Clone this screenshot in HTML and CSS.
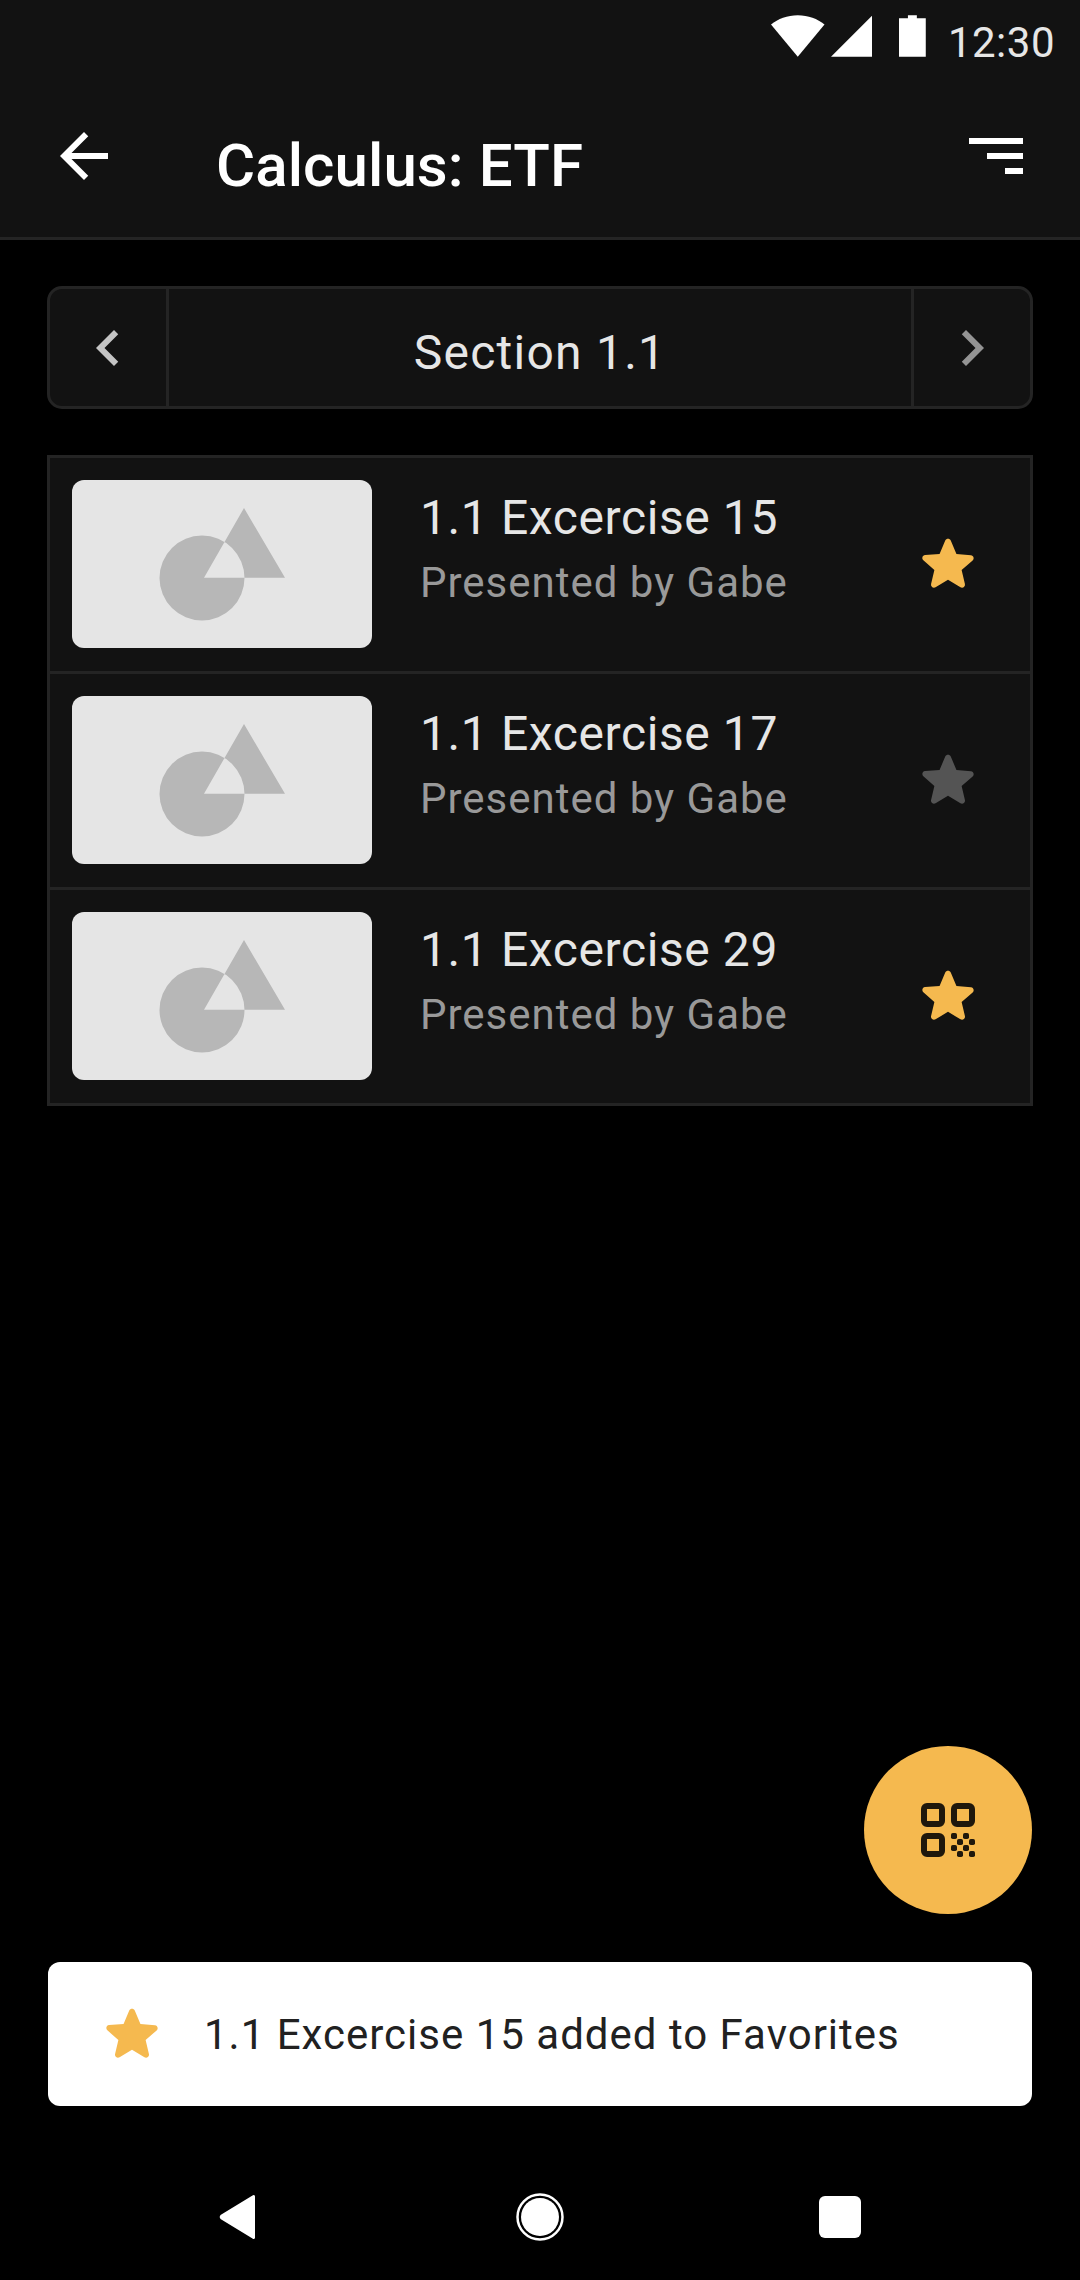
FILE: index.html
```html
<!DOCTYPE html>
<html lang="en">
<head>
<meta charset="utf-8">
<title>Calculus: ETF</title>
<link rel="stylesheet" href="styles.css">
</head>
<body>
<div class="screen">
  <header class="header">
    <div class="status">
      <svg class="st-wifi" viewBox="0 0 54 42"><path d="M27 42 0 9.5C7 3.5 16.5 0 27 0s20 3.500 27 9.500z"/></svg>
      <svg class="st-signal" viewBox="0 0 42 42"><path d="M42 0v42H0z"/></svg>
      <svg class="st-batt" viewBox="0 0 27 42"><path d="M9 0h9v3h9v39H0V3h9z"/></svg>
      <span class="st-time">12:30</span>
    </div>
    <div class="toolbar">
      <svg class="tb-back" viewBox="0 0 24 24"><path d="M20 11H7.830l5.590-5.590L12 4l-8 8 8 8 1.410-1.410L7.830 13H20v-2z"/></svg>
      <h1 class="tb-title">Calculus: ETF</h1>
      <svg class="tb-filter" viewBox="0 0 54 36"><path d="M0 0h54v6H0zM18 15h36v6H18zM36 30h18v6H36z"/></svg>
    </div>
  </header>

  <div class="pager">
    <div class="pager-btn"><svg class="chev chev-l" viewBox="0 0 24 24"><path d="M15.410 7.410 14 6l-6 6 6 6 1.410-1.410L10.830 12z"/></svg></div>
    <div class="pager-label">Section 1.1</div>
    <div class="pager-btn pager-btn-r"><svg class="chev chev-r" viewBox="0 0 24 24"><path d="M8.590 16.590 10 18l6-6-6-6-1.410 1.410L13.170 12z"/></svg></div>
  </div>

  <ul class="list">
    <li class="row">
      <div class="thumb"><svg class="thumb-art" viewBox="0 0 300 168"><path fill-rule="evenodd" d="M87.500 98a42.500 42.500 0 1 0 85 0 42.500 42.500 0 1 0-85 0zM132 97.800 172 28l41 69.800z"/></svg></div>
      <div class="row-text"><div class="row-title">1.1 Excercise 15</div><div class="row-sub">Presented by Gabe</div></div>
      <svg class="star star-on" viewBox="0 0 24 24"><path d="M12 17.270l4.150 2.510c.76.46 1.690-.22 1.490-1.080l-1.100-4.720 3.670-3.180c.67-.58.31-1.680-.57-1.750l-4.830-.41-1.890-4.460c-.34-.81-1.500-.81-1.840 0L9.190 8.630l-4.830.41c-.88.07-1.240 1.170-.57 1.750l3.670 3.180-1.100 4.720c-.2.86.73 1.540 1.490 1.080l4.150-2.500z"/></svg>
    </li>
    <li class="row">
      <div class="thumb"><svg class="thumb-art" viewBox="0 0 300 168"><path fill-rule="evenodd" d="M87.500 98a42.500 42.500 0 1 0 85 0 42.500 42.500 0 1 0-85 0zM132 97.800 172 28l41 69.800z"/></svg></div>
      <div class="row-text"><div class="row-title">1.1 Excercise 17</div><div class="row-sub">Presented by Gabe</div></div>
      <svg class="star star-off" viewBox="0 0 24 24"><path d="M12 17.270l4.150 2.510c.76.46 1.690-.22 1.490-1.080l-1.100-4.720 3.670-3.180c.67-.58.31-1.680-.57-1.750l-4.830-.41-1.890-4.460c-.34-.81-1.500-.81-1.840 0L9.190 8.630l-4.830.41c-.88.07-1.240 1.170-.57 1.750l3.670 3.180-1.100 4.720c-.2.86.73 1.540 1.490 1.080l4.150-2.500z"/></svg>
    </li>
    <li class="row">
      <div class="thumb"><svg class="thumb-art" viewBox="0 0 300 168"><path fill-rule="evenodd" d="M87.500 98a42.500 42.500 0 1 0 85 0 42.500 42.500 0 1 0-85 0zM132 97.800 172 28l41 69.800z"/></svg></div>
      <div class="row-text"><div class="row-title">1.1 Excercise 29</div><div class="row-sub">Presented by Gabe</div></div>
      <svg class="star star-on" viewBox="0 0 24 24"><path d="M12 17.270l4.150 2.510c.76.46 1.690-.22 1.490-1.080l-1.100-4.720 3.670-3.180c.67-.58.31-1.680-.57-1.750l-4.830-.41-1.890-4.460c-.34-.81-1.500-.81-1.840 0L9.190 8.630l-4.830.41c-.88.07-1.240 1.170-.57 1.750l3.670 3.180-1.100 4.720c-.2.86.73 1.540 1.490 1.080l4.150-2.500z"/></svg>
    </li>
  </ul>

  <div class="spacer"></div>

  <div class="fab-row">
    <div class="fab">
      <svg class="qr" viewBox="0 0 54 54">
        <g class="qr-rings">
          <rect x="3" y="3" width="18" height="18" rx="3"/>
          <rect x="33" y="3" width="18" height="18" rx="3"/>
          <rect x="3" y="33" width="18" height="18" rx="3"/>
        </g>
        <g class="qr-dots">
          <rect x="30" y="30" width="6" height="6" rx="1.800"/>
          <rect x="42" y="30" width="6" height="6" rx="1.800"/>
          <rect x="36" y="36" width="6" height="6" rx="1.800"/>
          <rect x="48" y="36" width="6" height="6" rx="1.800"/>
          <rect x="30" y="42" width="6" height="6" rx="1.800"/>
          <rect x="42" y="42" width="6" height="6" rx="1.800"/>
          <rect x="36" y="48" width="6" height="6" rx="1.800"/>
          <rect x="48" y="48" width="6" height="6" rx="1.800"/>
        </g>
      </svg>
    </div>
  </div>

  <div class="snackbar">
    <svg class="star star-on snack-star" viewBox="0 0 24 24"><path d="M12 17.270l4.150 2.510c.76.46 1.690-.22 1.490-1.080l-1.100-4.720 3.670-3.180c.67-.58.31-1.680-.57-1.750l-4.830-.41-1.890-4.460c-.34-.81-1.500-.81-1.840 0L9.190 8.630l-4.830.41c-.88.07-1.240 1.170-.57 1.750l3.670 3.180-1.100 4.720c-.2.86.73 1.540 1.490 1.080l4.150-2.500z"/></svg>
    <span class="snack-text">1.1 Excercise 15 added to Favorites</span>
  </div>

  <nav class="navbar">
    <svg class="nav-icon" viewBox="0 0 72 72"><path d="M51 15.500v41c0 1.500-1.500 2-2.500 1L16.500 38a3 3 0 0 1 0-4L48.500 14.500c1-1 2.500-.5 2.500 1z"/></svg>
    <svg class="nav-icon" viewBox="0 0 72 72"><circle class="nav-ring" cx="36" cy="36" r="22.500"/><circle cx="36" cy="36" r="19"/></svg>
    <svg class="nav-icon" viewBox="0 0 72 72"><rect x="15" y="15" width="42" height="42" rx="6"/></svg>
  </nav>
</div>
</body>
</html>
```

FILE: styles.css
```css
* { box-sizing: border-box; }
html, body { margin: 0; padding: 0; }
body { background: #000; font-family: Roboto, "Liberation Sans", sans-serif; }
.screen { width: 1080px; height: 2280px; display: flex; flex-direction: column; background: #000; overflow: hidden; }

.header { height: 240px; background: #121212; border-bottom: 3px solid #242424; flex: none; }
.status { height: 72px; display: flex; align-items: flex-start; padding: 15px 25px 0 771px; fill: #fff; }
.st-wifi { width: 54px; height: 42px; }
.st-signal { width: 42px; height: 42px; margin-left: 6px; }
.st-batt { width: 27px; height: 42px; margin-left: 27px; }
.st-time { margin-left: 22px; font-size: 42px; line-height: 50px; height: 50px; margin-top: 3px; letter-spacing: 0.5px; color: #e6e6e6; }

.toolbar { display: flex; align-items: flex-start; position: relative; height: 165px; }
.tb-back { width: 72px; height: 72px; margin: 48px 0 0 48px; fill: #fff; flex: none; }
.tb-title { margin: 58px 0 0 96px; font-size: 60px; line-height: 72px; font-weight: 500; letter-spacing: 0.1px; color: #fff; flex: 1; }
.tb-filter { width: 54px; height: 36px; margin: 66px 57px 0 0; fill: #fff; flex: none; }

.pager { flex: none; display: flex; width: 986px; height: 123px; margin: 46px 0 0 47px; background: #121212; border: 3px solid #242424; border-radius: 15px; }
.pager-btn { width: 119px; flex: none; border-right: 3px solid #242424; display: flex; align-items: center; justify-content: center; }
.pager-btn-r { width: 119px; border-right: 0; border-left: 3px solid #242424; }
.chev { width: 72px; height: 72px; }
.chev-l { fill: #c4c4c4; }
.chev-r { fill: #949494; }
.pager-label { flex: 1; text-align: center; font-size: 48px; line-height: 127px; letter-spacing: 1.25px; color: #e6e6e6; }

.list { flex: none; list-style: none; width: 986px; margin: 46px 0 0 47px; padding: 0; background: #121212; border: 3px solid #242424; }
.row { height: 216px; display: flex; align-items: flex-start; padding: 22px 0 0 22px; border-bottom: 3px solid #242424; }
.row:last-child { height: 213px; border-bottom: 0; }
.thumb { width: 300px; height: 168px; flex: none; background: #e5e5e5; border-radius: 12px; }
.thumb-art { display: block; width: 300px; height: 168px; fill: #b7b7b7; }
.row-text { flex: none; width: 455px; margin-left: 48px; padding-top: 8px; }
.row-title { font-size: 48px; line-height: 60px; letter-spacing: 0.6px; color: #e6e6e6; white-space: nowrap; }
.row-sub { font-size: 42px; line-height: 50px; margin-top: 10px; letter-spacing: 1px; color: #999; white-space: nowrap; }
.star { width: 72px; height: 72px; flex: none; }
.row .star { margin: 48px 0 0 37px; }
.star-on { fill: #f5b94f; }
.star-off { fill: #545454; }

.spacer { flex: 1; }
.fab-row { flex: none; display: flex; justify-content: flex-end; padding-right: 48px; }
.fab { width: 168px; height: 168px; border-radius: 50%; background: #f5b94f; display: flex; align-items: center; justify-content: center; }
.qr { width: 54px; height: 54px; display: block; }
.qr-rings { fill: none; stroke: #1f180c; stroke-width: 6; }
.qr-dots { fill: #1f180c; }

.snackbar { flex: none; height: 144px; margin: 48px 48px 0; background: #fff; border-radius: 12px; display: flex; align-items: center; padding-left: 48px; }
.snack-text { margin-left: 36px; font-size: 42px; letter-spacing: 1px; color: #212121; white-space: nowrap; }

.navbar { flex: none; height: 174px; padding-top: 75px; display: flex; justify-content: center; gap: 228px; fill: #fff; }
.nav-icon { width: 72px; height: 72px; }
.nav-ring { fill: none; stroke: #fff; stroke-width: 2.500; }
```
